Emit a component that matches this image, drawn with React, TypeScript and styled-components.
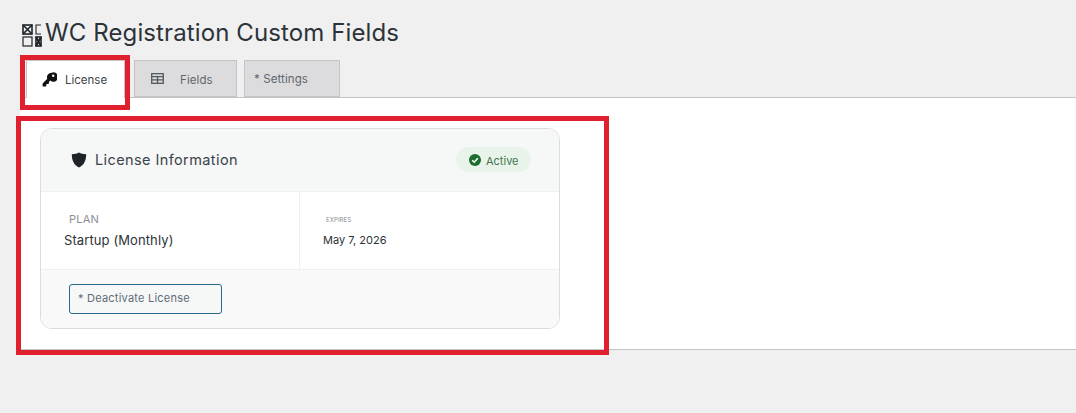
import React from "react";
import styled, { createGlobalStyle } from "styled-components";

const Global = createGlobalStyle`
  html, body { margin: 0; padding: 0; background: #f0f0f1; }
  body { font-family: Inter, "Liberation Sans", sans-serif; color: #2c3338; }
  * { box-sizing: border-box; }
`;
const Page = styled.div`
  position: relative;
  width: 1076px;
  height: 413px;
  overflow: hidden;
  padding: 15px 0 0 20px;
`;
const TitleRow = styled.div`
  display: flex;
  align-items: center;
  gap: 3px;
  height: 35px;
  padding-left: 2px;
`;
const Title = styled.h1`
  margin: 0;
  font-size: 24px;
  font-weight: 400;
  line-height: 35px;
  letter-spacing: 0.11px;
  color: #2c3338;
`;
const AppIconSvg = styled.svg`
  flex: none;
  margin-top: 6px;
`;
const Tabs = styled.nav`
  display: flex;
  align-items: flex-end;
  height: 37px;
  margin-top: 10px;
  padding-left: 6px;
`;
const Tab = styled.div<{ $active?: boolean; $w: number; $gap: number; $mr: number; $pl: number }>`
  display: flex;
  align-items: center;
  gap: ${(p) => p.$gap}px;
  width: ${(p) => p.$w}px;
  height: ${(p) => (p.$active ? 38 : 37)}px;
  margin-right: ${(p) => p.$mr}px;
  margin-bottom: ${(p) => (p.$active ? -1 : 0)}px;
  padding-left: ${(p) => p.$pl}px;
  background: ${(p) => (p.$active ? "#fff" : "#dcdcde")};
  border: 1px solid #c3c4c7;
  border-bottom: ${(p) => (p.$active ? "none" : "1px solid #c3c4c7")};
  font-size: 11.5px;
  letter-spacing: ${(p) => (p.$active ? 0 : 0.1)}px;
  color: ${(p) => (p.$active ? "#3c434a" : "#5f666c")};
`;
const FieldsLabel = styled.span`
  padding-top: 2px;
`;
const Panel = styled.main`
  height: 253px;
  background: #fff;
  border-top: 1px solid #c3c4c7;
  border-bottom: 1px solid #c3c4c7;
  padding: 30px 0 0 20px;
`;
const Card = styled.section`
  width: 520px;
  height: 201px;
  border: 1px solid #dcdcde;
  border-radius: 12px;
  overflow: hidden;
  background: #fff;
`;
const CardHead = styled.header`
  display: flex;
  align-items: center;
  justify-content: space-between;
  height: 63px;
  padding: 0 28px 1px 30px;
  background: #f6f7f7;
  border-bottom: 1px solid #f0f0f1;
`;
const HeadLeft = styled.div`
  display: flex;
  align-items: center;
  gap: 8px;
`;
const CardTitle = styled.h2`
  margin: 0;
  font-size: 14.5px;
  font-weight: 400;
  letter-spacing: 0.4px;
  color: #3c434a;
`;
const Badge = styled.span`
  display: flex;
  align-items: center;
  gap: 5px;
  width: 75px;
  height: 25px;
  padding-left: 13px;
  border-radius: 13px;
  background: #e8f4ea;
  font-size: 11px;
  color: #477350;
`;
const BadgeText = styled.span`
  padding-top: 2px;
`;
const Grid = styled.div`
  display: grid;
  grid-template-columns: 259px 1fr;
  height: 78px;
  border-bottom: 1px solid #f0f0f1;
`;
const Cell = styled.div<{ $pad: number; $right?: boolean }>`
  padding: 20px 0 0 ${(p) => p.$pad}px;
  border-right: ${(p) => (p.$right ? "1px solid #f0f0f1" : "none")};
`;
const Label = styled.div<{ $small?: boolean; $indent: number }>`
  margin-left: ${(p) => p.$indent}px;
  height: 14px;
  line-height: ${(p) => (p.$small ? 15 : 14)}px;
  font-size: ${(p) => (p.$small ? 6.2 : 11)}px;
  letter-spacing: ${(p) => (p.$small ? 0 : 0.2)}px;
  color: #8c8f94;
`;
const Value = styled.div<{ $size: number; $mt: number; $ls: number }>`
  margin-top: ${(p) => p.$mt}px;
  font-size: ${(p) => p.$size}px;
  letter-spacing: ${(p) => p.$ls}px;
  line-height: 16px;
  color: #2c3338;
`;
const Footer = styled.footer`
  height: 59px;
  padding: 14px 0 0 28px;
  background: #f9f9f9;
`;
const Button = styled.button`
  display: block;
  width: 153px;
  height: 30px;
  padding: 0 0 3px 8px;
  text-align: left;
  background: #f6f7f7;
  border: 1px solid #2a6a8c;
  border-radius: 3px;
  font: 400 11px Inter, "Liberation Sans", sans-serif;
  letter-spacing: 0.22px;
  color: #5f6c76;
`;
const Highlight = styled.div<{ $x: number; $y: number; $w: number; $h: number }>`
  position: absolute;
  left: ${(p) => p.$x}px;
  top: ${(p) => p.$y}px;
  width: ${(p) => p.$w}px;
  height: ${(p) => p.$h}px;
  border: 5px solid #e0202e;
  pointer-events: none;
`;

const AppIcon = () => (
  <AppIconSvg width="20" height="23" viewBox="0 0 20 23" fill="none" stroke="#1d2327" strokeWidth="1.6">
    <rect x="1" y="1" width="9" height="9" />
    <path d="M1 1l9 9M10 1l-9 9" />
    <path d="M19 1h-5v9h5" strokeWidth="1.1" />
    <rect x="1" y="13" width="9" height="9" strokeWidth="1.2" />
    <rect x="14" y="13" width="5" height="9" />
    <path d="M14 13l5 9M19 13l-5 9" strokeWidth="2" />
  </AppIconSvg>
);
const KeyIcon = () => (
  <svg width="15" height="15" viewBox="0 0 24 24" fill="#111">
    <path d="M15.5 1a7.5 7.5 0 0 0-7.1 9.9L1 18.3V23h5l1-1v-3h3l1.3-1.3v-2.6l1.8-1.6A7.5 7.5 0 1 0 15.5 1zm2.4 6.8a2 2 0 1 1 0-4 2 2 0 0 1 0 4z" />
  </svg>
);
const TableIcon = () => (
  <svg width="13" height="11" viewBox="0 0 13 11" fill="none" stroke="#50575e" strokeWidth="1.3">
    <rect x="0.7" y="0.7" width="11.6" height="9.6" />
    <path d="M0.7 3.6h11.6M0.7 6.9h11.6M6.5 3.6v6.7" />
  </svg>
);
const ShieldIcon = () => (
  <svg width="16" height="16" viewBox="0 0 16 16" fill="#1d2327">
    <path d="M8 0.4 C6 1.6 4 2 0.8 2.2 C0.8 8.6 3 13 8 15.6 C13 13 15.2 8.6 15.2 2.2 C12 2 10 1.6 8 0.4z" />
  </svg>
);
const CheckIcon = () => (
  <svg width="12" height="12" viewBox="0 0 12 12">
    <circle cx="6" cy="6" r="6" fill="#1e6b2e" />
    <path d="M3.2 6.2l2 2 3.6-4" fill="none" stroke="#fff" strokeWidth="1.6" />
  </svg>
);

export default function App() {
  return (
    <Page>
      <Global />
      <TitleRow>
        <AppIcon />
        <Title>WC Registration Custom Fields</Title>
      </TitleRow>
      <Tabs>
        <Tab $active $w={99} $gap={8} $mr={9} $pl={15}>
          <KeyIcon />
          License
        </Tab>
        <Tab $w={103} $gap={16} $mr={7} $pl={16}>
          <TableIcon />
          <FieldsLabel>Fields</FieldsLabel>
        </Tab>
        <Tab $w={96} $gap={0} $mr={0} $pl={9}>
          * Settings
        </Tab>
      </Tabs>
      <Panel>
        <Card>
          <CardHead>
            <HeadLeft>
              <ShieldIcon />
              <CardTitle>License Information</CardTitle>
            </HeadLeft>
            <Badge>
              <CheckIcon />
              <BadgeText>Active</BadgeText>
            </Badge>
          </CardHead>
          <Grid>
            <Cell $pad={23} $right>
              <Label $indent={5}>PLAN</Label>
              <Value $size={13} $mt={6} $ls={0.1}>Startup (Monthly)</Value>
            </Cell>
            <Cell $pad={23}>
              <Label $small $indent={3}>EXPIRES</Label>
              <Value $size={11} $mt={6} $ls={0}>May 7, 2026</Value>
            </Cell>
          </Grid>
          <Footer>
            <Button>* Deactivate License</Button>
          </Footer>
        </Card>
      </Panel>
      <Highlight $x={20} $y={55} $w={110} $h={55} />
      <Highlight $x={16} $y={116} $w={593} $h={239} />
    </Page>
  );
}
